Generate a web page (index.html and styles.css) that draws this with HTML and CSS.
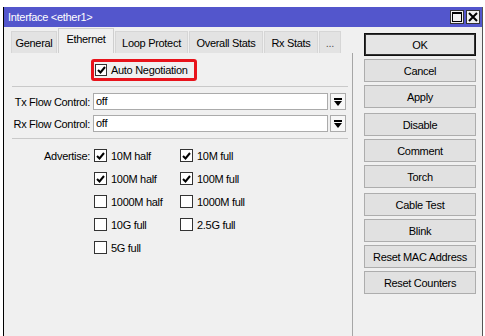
FILE: index.html
```html
<!DOCTYPE html>
<html lang="en">
<head>
<meta charset="UTF-8">
<title>Interface &lt;ether1&gt;</title>
<link rel="stylesheet" href="styles.css">
</head>
<body>

<div class="window">
  <div class="titlebar">
    <span class="title">Interface &lt;ether1&gt;</span>
    <div class="title-btns">
      <span class="tbtn"><svg width="10" height="10" viewBox="0 0 10 10"><rect x="0.5" y="0.5" width="9" height="9" fill="none" stroke="#000"/><rect x="0" y="0" width="10" height="2" fill="#000"/></svg></span>
      <span class="tbtn"><svg width="10" height="10" viewBox="0 0 10 10"><path d="M1 1 L9 9 M9 1 L1 9" stroke="#000" stroke-width="2"/></svg></span>
    </div>
  </div>

  <div class="content">
    <div class="main">
      <!-- tabs -->
      <div class="tabs">
        <div class="tab w-general">General</div>
        <div class="tab active w-eth">Ethernet</div>
        <div class="tab w-loop">Loop Protect</div>
        <div class="tab w-overall">Overall Stats</div>
        <div class="tab w-rx">Rx Stats</div>
        <div class="tab w-more">...</div>
      </div>

      <div class="panel">
        <div class="auto-row">
          <div class="highlight">
            <span class="cb on"><svg width="9" height="8" viewBox="0 0 9 8"><path d="M1 4 L3.5 6.5 L8 1" fill="none" stroke="#000" stroke-width="2"/></svg></span>
            <span>Auto Negotiation</span>
          </div>
        </div>

        <div class="sep"></div>

        <div class="field">
          <label>Tx Flow Control:</label>
          <div class="input">off</div>
          <div class="drop"><svg width="8" height="8" viewBox="0 0 8 8"><rect x="0" y="0" width="8" height="2" fill="#000"/><polygon points="0,3 8,3 4,8" fill="#000"/></svg></div>
        </div>
        <div class="field">
          <label>Rx Flow Control:</label>
          <div class="input">off</div>
          <div class="drop"><svg width="8" height="8" viewBox="0 0 8 8"><rect x="0" y="0" width="8" height="2" fill="#000"/><polygon points="0,3 8,3 4,8" fill="#000"/></svg></div>
        </div>

        <div class="sep sep-2"></div>

        <div class="adv">
          <label>Advertise:</label>
          <div class="chk"><span class="cb on"><svg width="9" height="8" viewBox="0 0 9 8"><path d="M1 4 L3.5 6.5 L8 1" fill="none" stroke="#000" stroke-width="2"/></svg></span>10M half</div>
          <div class="chk"><span class="cb on"><svg width="9" height="8" viewBox="0 0 9 8"><path d="M1 4 L3.5 6.5 L8 1" fill="none" stroke="#000" stroke-width="2"/></svg></span>10M full</div>

          <span></span>
          <div class="chk"><span class="cb on"><svg width="9" height="8" viewBox="0 0 9 8"><path d="M1 4 L3.5 6.5 L8 1" fill="none" stroke="#000" stroke-width="2"/></svg></span>100M half</div>
          <div class="chk"><span class="cb on"><svg width="9" height="8" viewBox="0 0 9 8"><path d="M1 4 L3.5 6.5 L8 1" fill="none" stroke="#000" stroke-width="2"/></svg></span>100M full</div>

          <span></span>
          <div class="chk"><span class="cb"></span>1000M half</div>
          <div class="chk"><span class="cb"></span>1000M full</div>

          <span></span>
          <div class="chk"><span class="cb"></span>10G full</div>
          <div class="chk"><span class="cb"></span>2.5G full</div>

          <span></span>
          <div class="chk"><span class="cb"></span>5G full</div>
        </div>
      </div>
    </div>

    <!-- buttons -->
    <div class="side">
      <div class="group">
        <button class="default">OK</button>
        <button>Cancel</button>
        <button>Apply</button>
      </div>
      <div class="group">
        <button>Disable</button>
        <button>Comment</button>
        <button>Torch</button>
      </div>
      <div class="group">
        <button>Cable Test</button>
        <button>Blink</button>
        <button>Reset MAC Address</button>
        <button>Reset Counters</button>
      </div>
    </div>
  </div>
</div>

</body>
</html>
```

FILE: styles.css
```css
body { margin:0; background:#fff; font-family:"Liberation Sans", Arial, sans-serif; font-size:11px; letter-spacing:-0.3px; color:#000; }

.window {
  margin:7px 0 0 3px; width:480px; height:329px;
  border-left:1px solid #000; border-right:1px solid #555;
  background:#f0f0f0; box-sizing:border-box;
  display:flex; flex-direction:column;
}
.titlebar {
  height:20px; background:#5356cc; color:#fff;
  display:flex; align-items:center; justify-content:space-between;
  padding-left:4px;
}
.title { font-size:11px; }
.title-btns { display:flex; gap:2px; margin-right:2px; }
.tbtn {
  width:14px; height:14px; box-sizing:border-box;
  background:#f0f0f0; border:1px solid #333;
  display:flex; align-items:center; justify-content:center;
}

.content { display:flex; flex:1; }
.main { width:345px; margin-left:4px; display:flex; flex-direction:column; }

/* tabs */
.tabs { display:flex; align-items:flex-end; height:26px; padding-left:3px; gap:1px; }
.tab {
  height:22px; box-sizing:border-box; background:#e3e3e3;
  border:1px solid #d6d6d6; border-bottom:none;
  display:flex; align-items:center; justify-content:center;
}
.tab.active { height:25px; background:#f0f0f0; border-color:#cfcfcf; padding-bottom:4px; }
.w-general { width:46px; }
.w-eth     { width:56px; }
.w-loop    { width:73px; }
.w-overall { width:74px; }
.w-rx      { width:54px; }
.w-more    { width:22px; color:#555; }

.panel { flex:1; border-right:1px solid #a6a6a6; padding-top:6px; }

.auto-row { padding-left:83px; }
.highlight {
  width:106px; height:22px; box-sizing:border-box;
  border:3px solid #e8131b; border-radius:3px;
  display:flex; align-items:center; gap:4px; padding-left:1px;
}

.sep { margin:5px 4px 0; border-top:1px solid #c9c9c9; }
.sep-2 { margin-top:6px; }

.field { display:flex; align-items:center; margin-top:6px; height:17px; }
.field + .field { margin-top:5px; }
.field label { width:82px; text-align:right; margin-right:3px; }
.input {
  width:235px; height:17px; box-sizing:border-box;
  background:#fff; border:1px solid #ababab; padding:1px 2px;
  line-height:13px;
}
.drop {
  width:16px; height:17px; box-sizing:border-box; margin-left:2px;
  background:#f7f7f7; border:1px solid #ababab;
  display:flex; align-items:center; justify-content:center;
}

.adv {
  display:grid; grid-template-columns:82px 86px auto;
  grid-auto-rows:23px; align-items:center; margin-top:5px;
}
.adv label { text-align:right; }
.chk { display:flex; align-items:center; gap:4px; padding-left:4px; }

.cb {
  width:13px; height:13px; box-sizing:border-box;
  background:#fff; border:1px solid #333;
  display:inline-flex; align-items:center; justify-content:center;
}
.highlight .cb { width:12px; height:12px; }

/* side buttons */
.side { margin-left:11px; width:112px; padding-top:6px; display:flex; flex-direction:column; gap:5px; }
.group { display:flex; flex-direction:column; gap:3px; }
button {
  height:23px; width:112px; box-sizing:border-box;
  background:#e1e1e1; border:1px solid #adadad;
  font-family:"Liberation Sans", Arial, sans-serif; font-size:11px; letter-spacing:-0.3px; color:#000;
  padding:0;
}
button.default { border:1px solid #111; box-shadow:inset 0 0 0 1px #333; background:#e5e5e5; }
```
